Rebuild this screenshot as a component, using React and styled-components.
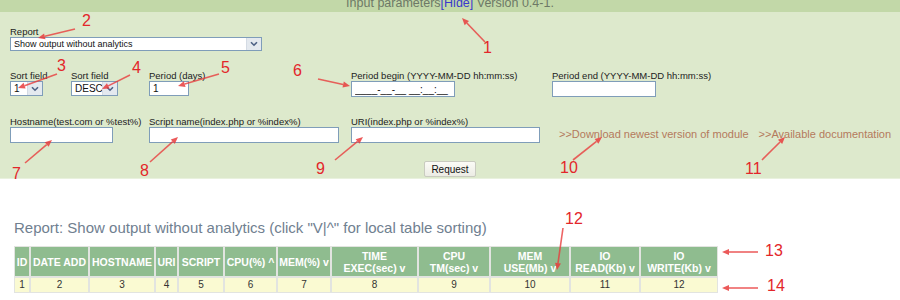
import React from 'react';
import styled, { createGlobalStyle } from 'styled-components';

const GlobalStyle = createGlobalStyle`
  body {
    margin: 0;
    background: #fff;
    font-family: "Liberation Sans", Arial, sans-serif;
  }
`;

const Page = styled.div`
  position: relative;
  width: 900px;
  height: 300px;
  overflow: hidden;
`;

const TopBar = styled.div`
  height: 12px;
  overflow: hidden;
  background: #c2d8a8;
  text-align: center;
`;

const Caption = styled.div`
  margin-top: -5px;
  font-size: 12.5px;
  line-height: 16px;
  color: #6d7866;
`;

const HideLink = styled.a`
  color: #3a3acc;
  text-decoration: none;
`;

const Panel = styled.div`
  box-sizing: border-box;
  height: 167px;
  padding: 14px 0 0 10px;
  background: #dde9cc;
  border-bottom: 1px solid #e9f1de;
`;

const Row = styled.div`
  display: flex;
  align-items: flex-start;
  margin-top: ${p => p.$gap || 0}px;
`;

const Field = styled.div`
  width: ${p => p.$w}px;
  flex: none;
`;

const Label = styled.div`
  font-size: 9.5px;
  line-height: 11px;
  color: #222;
  white-space: nowrap;
`;

const SelectBox = styled.div`
  box-sizing: border-box;
  display: flex;
  align-items: stretch;
  width: ${p => p.$w}px;
  height: ${p => p.$h || 15}px;
  background: #fff;
  border: 1px solid #7f9db9;
`;

const SelectValue = styled.span`
  flex: 1;
  padding-left: 3px;
  font-size: ${p => p.$size || 10}px;
  line-height: ${p => p.$h - 2}px;
  color: #111;
  white-space: nowrap;
  overflow: hidden;
`;

const DropButton = styled.span`
  display: flex;
  align-items: center;
  justify-content: center;
  width: 14px;
  background: #e4e9ef;
  border-left: 1px solid #d4dbe4;
`;

const TextInput = styled.input`
  box-sizing: border-box;
  display: block;
  width: ${p => p.$w}px;
  height: ${p => p.$h || 16}px;
  margin: 0;
  padding: 0 3px;
  border: 1px solid #7f9db9;
  background: #fff;
  font-family: "Liberation Sans", Arial, sans-serif;
  font-size: 10px;
  color: #111;
  outline: none;
`;

const Links = styled.div`
  display: flex;
  gap: 10px;
  margin-top: 11px;
`;

const ModuleLink = styled.a`
  font-size: 11px;
  line-height: 14px;
  color: #b47a5c;
  text-decoration: none;
  white-space: nowrap;
`;

const ButtonRow = styled.div`
  display: flex;
  justify-content: center;
  margin-top: 18px;
  padding-right: 10px;
`;

const RequestButton = styled.button`
  box-sizing: border-box;
  width: 52px;
  height: 16px;
  padding: 0;
  border: 1px solid #c9cbc0;
  border-radius: 2px;
  background: linear-gradient(#fbfbf6, #ecece4);
  font-family: "Liberation Sans", Arial, sans-serif;
  font-size: 10px;
  color: #111;
`;

const Report = styled.div`
  padding: 40px 0 0 14px;
`;

const Title = styled.div`
  font-size: 15px;
  line-height: 17px;
  color: #708090;
`;

const Table = styled.table`
  margin-top: 10px;
  border-collapse: separate;
  border-spacing: 0;
  table-layout: fixed;
`;

const Th = styled.th`
  box-sizing: border-box;
  width: ${p => p.$w}px;
  height: 31px;
  padding: 0;
  border: 1px solid #e2e4e0;
  background: #8fbc8f;
  color: #fff;
  font-size: 10.5px;
  font-weight: bold;
  line-height: 12px;
  text-align: center;
  white-space: nowrap;
`;

const Td = styled.td`
  box-sizing: border-box;
  height: 16px;
  padding: 0;
  border: 1px solid #e2e4e0;
  background: #fafad2;
  color: #333;
  font-size: 10px;
  line-height: 14px;
  text-align: center;
`;

const Num = styled.span`
  position: absolute;
  left: ${p => p.$x}px;
  top: ${p => p.$y}px;
  font-size: 16px;
  line-height: 16px;
  color: #e3262a;
`;

const Overlay = styled.svg`
  position: absolute;
  left: 0;
  top: 0;
  pointer-events: none;
`;

const Chevron = () => (
  <svg width="8" height="6" viewBox="0 0 8 6">
    <path d="M1 1.2 L4 4.2 L7 1.2" fill="none" stroke="#4d6185" strokeWidth="1.6" />
  </svg>
);

const Select = ({ w, h, size, value }) => (
  <SelectBox $w={w} $h={h}>
    <SelectValue $h={h} $size={size}>{value}</SelectValue>
    <DropButton><Chevron /></DropButton>
  </SelectBox>
);

const columns = [
  { w: 16, t: ['ID'] },
  { w: 59, t: ['DATE ADD'] },
  { w: 66, t: ['HOSTNAME'] },
  { w: 23, t: ['URI'] },
  { w: 46, t: ['SCRIPT'] },
  { w: 53, t: ['CPU(%) ^'] },
  { w: 54, t: ['MEM(%) v'] },
  { w: 87, t: ['TIME', 'EXEC(sec) v'] },
  { w: 72, t: ['CPU', 'TM(sec) v'] },
  { w: 80, t: ['MEM', 'USE(Mb) v'] },
  { w: 70, t: ['IO', 'READ(Kb) v'] },
  { w: 78, t: ['IO', 'WRITE(Kb) v'] },
];

const arrows = [
  [485, 42, 462, 18],
  [75, 29, 38, 38],
  [57, 74, 18, 88],
  [130, 75, 102, 89],
  [219, 74, 178, 86],
  [318, 79, 350, 86],
  [25, 163, 52, 140],
  [150, 162, 178, 137],
  [335, 160, 363, 137],
  [573, 160, 602, 137],
  [762, 160, 785, 137],
  [563, 228, 557, 270],
  [758, 252, 722, 252],
  [758, 288, 722, 288],
];

const numbers = [
  ['1', 483, 40], ['2', 82, 13], ['3', 57, 58], ['4', 132, 60], ['5', 221, 60],
  ['6', 293, 63], ['7', 12, 166], ['8', 140, 163], ['9', 316, 161], ['10', 560, 160],
  ['11', 745, 161], ['12', 565, 211], ['13', 765, 243], ['14', 767, 278],
];

const Arrow = ({ x1, y1, x2, y2 }) => {
  const a = Math.atan2(y2 - y1, x2 - x1);
  const len = 7, half = 3;
  const bx = x2 - Math.cos(a) * len, by = y2 - Math.sin(a) * len;
  const px = -Math.sin(a) * half, py = Math.cos(a) * half;
  return (
    <g>
      <line x1={x1} y1={y1} x2={bx} y2={by} stroke="rgba(232,60,60,0.8)" strokeWidth="1.6" />
      <polygon points={`${x2},${y2} ${bx + px},${by + py} ${bx - px},${by - py}`} fill="rgba(232,60,60,0.85)" />
    </g>
  );
};

export default function App() {
  return (
    <Page>
      <GlobalStyle />
      <TopBar>
        <Caption>Input parameters<HideLink href="#">[Hide]</HideLink> Version 0.4-1.</Caption>
      </TopBar>
      <Panel>
        <Field $w={300}>
          <Label>Report</Label>
          <Select w={252} h={14} size={9} value="Show output without analytics" />
        </Field>
        <Row $gap={19}>
          <Field $w={61}>
            <Label>Sort field</Label>
            <Select w={33} h={15} value="1" />
          </Field>
          <Field $w={78}>
            <Label>Sort field</Label>
            <Select w={47} h={15} value="DESC" />
          </Field>
          <Field $w={202}>
            <Label>Period (days)</Label>
            <TextInput $w={40} $h={15} defaultValue="1" readOnly />
          </Field>
          <Field $w={201}>
            <Label>Period begin (YYYY-MM-DD hh:mm:ss)</Label>
            <TextInput $w={104} defaultValue="____-__-__ __:__:__" readOnly />
          </Field>
          <Field $w={200}>
            <Label>Period end (YYYY-MM-DD hh:mm:ss)</Label>
            <TextInput $w={104} readOnly />
          </Field>
        </Row>
        <Row $gap={19}>
          <Field $w={139}>
            <Label>Hostname(test.com or %test%)</Label>
            <TextInput $w={103} readOnly />
          </Field>
          <Field $w={202}>
            <Label>Script name(index.php or %index%)</Label>
            <TextInput $w={190} readOnly />
          </Field>
          <Field $w={208}>
            <Label>URI(index.php or %index%)</Label>
            <TextInput $w={189} readOnly />
          </Field>
          <Links>
            <ModuleLink href="#">&gt;&gt;Download newest version of module</ModuleLink>
            <ModuleLink href="#">&gt;&gt;Available documentation</ModuleLink>
          </Links>
        </Row>
        <ButtonRow>
          <RequestButton>Request</RequestButton>
        </ButtonRow>
      </Panel>
      <Report>
        <Title>Report: Show output without analytics (click "V|^" for local table sorting)</Title>
        <Table>
          <thead>
            <tr>
              {columns.map((c, i) => (
                <Th key={i} $w={c.w}>
                  {c.t.map((line, j) => (
                    <React.Fragment key={j}>{j > 0 && <br />}{line}</React.Fragment>
                  ))}
                </Th>
              ))}
            </tr>
          </thead>
          <tbody>
            <tr>
              {columns.map((c, i) => <Td key={i}>{i + 1}</Td>)}
            </tr>
          </tbody>
        </Table>
      </Report>
      <Overlay width="900" height="300">
        {arrows.map(([x1, y1, x2, y2], i) => <Arrow key={i} x1={x1} y1={y1} x2={x2} y2={y2} />)}
      </Overlay>
      {numbers.map(([n, x, y]) => <Num key={n} $x={x} $y={y}>{n}</Num>)}
    </Page>
  );
}
